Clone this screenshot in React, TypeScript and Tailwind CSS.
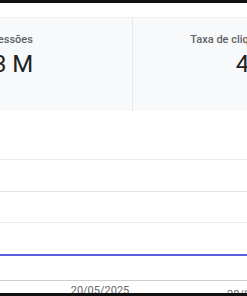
import React from "react";

const gridRows = [32, 31, 32];

const App = () => {
  return (
    <div
      className="w-[247px] h-[296px] overflow-hidden bg-white flex flex-col"
      style={{ fontFamily: "Roboto, 'Liberation Sans', sans-serif" }}
    >
      <div className="h-[3px] bg-[#111] shrink-0" />
      <div className="h-[14px] shrink-0" />

      {/* cards */}
      <div className="h-[94px] shrink-0 overflow-hidden bg-[#f8f9fa] border-t border-[#eceef0]">
        <div className="flex -ml-[124px] h-full">
          <div className="w-[257px] shrink-0 flex flex-col items-center pt-[15px] border-r border-[#e6e8eb]">
            <span className="text-[11px] leading-[14px] font-medium text-[#5f6368]">Impressões</span>
            <span className="text-[24px] leading-[30px] mt-[2px] text-[#202124]">1,3 M</span>
          </div>
          <div className="w-[255px] shrink-0 flex flex-col items-center pt-[15px]">
            <span className="text-[11px] leading-[14px] font-medium text-[#5f6368]">
              Taxa de cliques média (CTR)
            </span>
            <span className="text-[24px] leading-[30px] mt-[2px] text-[#202124]">4,1%</span>
          </div>
        </div>
      </div>

      {/* chart */}
      <div className="flex-1 min-h-0 overflow-hidden flex flex-col pt-[48px]">
        {gridRows.map((h, i) => (
          <div
            key={i}
            className={`shrink-0 border-t ${i === 1 ? "border-[#e4e4e4]" : "border-[#ececec]"}`}
            style={{ height: h }}
          />
        ))}
        <div className="h-[26px] shrink-0 border-t-2 border-[#5b5ee0]" />
        <div className="border-t border-[#cfcfcf] h-[13px] shrink-0 flex overflow-hidden">
          <div className="w-[46px] shrink-0" />
          <div className="w-[108px] shrink-0 flex flex-col items-center">
            <div className="w-px h-[4px] bg-[#cfcfcf]" />
            <span className="text-[11px] leading-[12px] mt-[4px] text-[#666] whitespace-nowrap">20/05/2025</span>
          </div>
          <div className="w-[73px] shrink-0" />
          <div className="flex-1 pt-[4px]">
            <span className="block text-[11px] leading-[12px] mt-[4px] text-[#666] whitespace-nowrap">20/06/2025</span>
          </div>
        </div>
      </div>
      <div className="h-[3px] bg-[#111] shrink-0" />
    </div>
  );
};

export default App;
